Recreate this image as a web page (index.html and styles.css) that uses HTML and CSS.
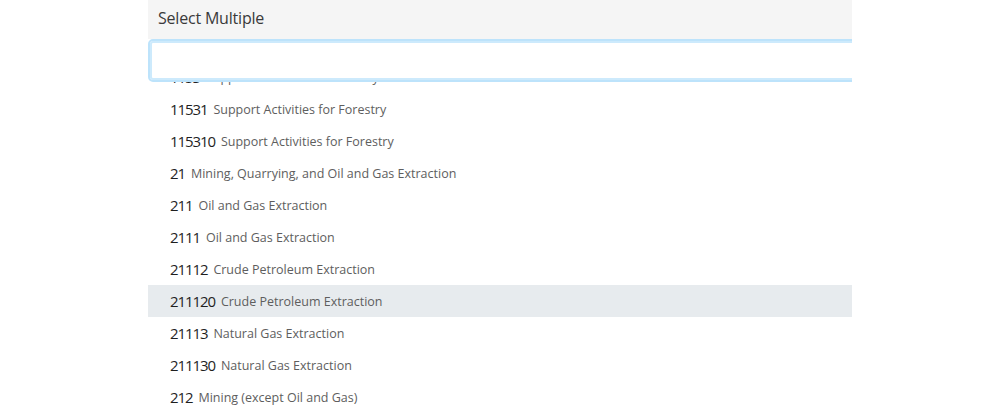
FILE: index.html
```html
<!DOCTYPE html>
<html>
<head>
<meta charset="utf-8">
<link rel="stylesheet" href="styles.css">
</head>
<body>
<div class="picker">
  <div class="header">Select Multiple</div>
  <div class="search"><input class="search-input" type="text"></div>
  <div class="list">
    <ul class="options">
      <li class="option"><span class="code">1153</span><span class="desc">Support Activities for Forestry</span></li>
      <li class="option"><span class="code">11531</span><span class="desc">Support Activities for Forestry</span></li>
      <li class="option"><span class="code">115310</span><span class="desc">Support Activities for Forestry</span></li>
      <li class="option"><span class="code">21</span><span class="desc">Mining, Quarrying, and Oil and Gas Extraction</span></li>
      <li class="option"><span class="code">211</span><span class="desc">Oil and Gas Extraction</span></li>
      <li class="option"><span class="code">2111</span><span class="desc">Oil and Gas Extraction</span></li>
      <li class="option"><span class="code">21112</span><span class="desc">Crude Petroleum Extraction</span></li>
      <li class="option active"><span class="code">211120</span><span class="desc">Crude Petroleum Extraction</span></li>
      <li class="option"><span class="code">21113</span><span class="desc">Natural Gas Extraction</span></li>
      <li class="option"><span class="code">211130</span><span class="desc">Natural Gas Extraction</span></li>
      <li class="option"><span class="code">212</span><span class="desc">Mining (except Oil and Gas)</span></li>
      <li class="option"><span class="code">2121</span><span class="desc">Coal Mining</span></li>
    </ul>
  </div>
</div>
</body>
</html>
```
FILE: styles.css
```css
html, body {
  margin: 0;
  padding: 0;
  background: #fff;
  height: 406px;
  overflow: hidden;
}
body {
  font-family: "Open Sans", "Noto Sans", sans-serif;
}
.picker {
  width: 704px;
  margin-left: 148px;
  height: 406px;
  display: flex;
  flex-direction: column;
  overflow: hidden;
}
.header {
  height: 39px;
  flex: none;
  background: #f5f5f5;
  box-sizing: border-box;
  padding: 6px 0 0 10px;
  font-size: 16px;
  letter-spacing: -0.2px;
  color: #3a3a3a;
  line-height: 24px;
}
.search {
  flex: none;
  height: 43px;
  position: relative;
  z-index: 2;
}
.search-input {
  display: block;
  box-sizing: border-box;
  width: 720px;
  height: 43px;
  margin: 0;
  border: 2px solid #bde3fb;
  border-radius: 5px;
  box-shadow: inset 0 0 0 2px #cdeafc;
  background: #fff;
  outline: none;
  padding: 0 10px;
}
.list {
  flex: 1;
  overflow: hidden;
}
.options {
  list-style: none;
  margin: -21px 0 0 0;
  padding: 0;
}
.option {
  height: 32px;
  display: flex;
  align-items: center;
  padding-left: 22px;
  gap: 6px;
}
.option.active {
  background: #e7ebee;
}
.code {
  font-size: 15px;
  color: #1f1f1f;
  letter-spacing: -1.1px;
}
.desc {
  font-size: 12.5px;
  color: #5e5e5e;
}
```
